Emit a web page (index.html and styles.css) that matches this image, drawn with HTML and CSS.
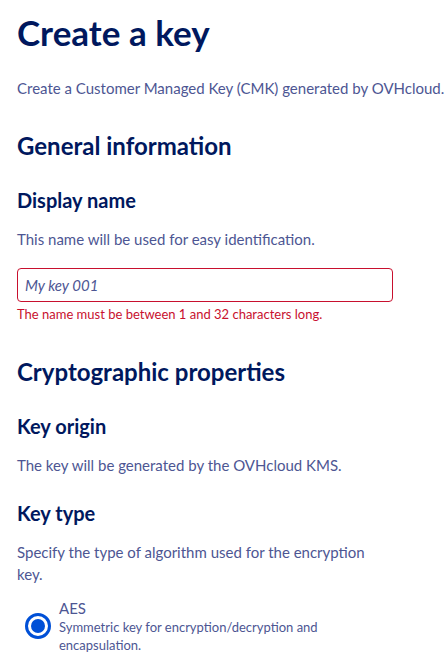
FILE: index.html
```html
<!DOCTYPE html>
<html lang="en">
<head>
<meta charset="utf-8">
<title>Create a key</title>
<link rel="stylesheet" href="styles.css">
</head>
<body>
<main class="page">
  <h1 class="title">Create a key</h1>
  <p class="lead">Create a Customer Managed Key (CMK) generated by OVHcloud.</p>

  <section class="section">
    <h2 class="section-title">General information</h2>
    <div class="field">
      <h3 class="field-title">Display name</h3>
      <p class="text">This name will be used for easy identification.</p>
      <input class="input input-error" type="text" placeholder="My key 001">
      <p class="error">The name must be between 1 and 32 characters long.</p>
    </div>
  </section>

  <section class="section">
    <h2 class="section-title">Cryptographic properties</h2>
    <div class="field">
      <h3 class="field-title">Key origin</h3>
      <p class="text">The key will be generated by the OVHcloud KMS.</p>
    </div>
    <div class="field">
      <h3 class="field-title">Key type</h3>
      <p class="text narrow">Specify the type of algorithm used for the encryption key.</p>
      <label class="radio-row">
        <span class="radio"><span class="radio-dot"></span></span>
        <span class="radio-text">
          <span class="radio-label">AES</span>
          <span class="radio-desc">Symmetric key for encryption/decryption and encapsulation.</span>
        </span>
      </label>
    </div>
  </section>
</main>
</body>
</html>
```
FILE: styles.css
```css
* { box-sizing: border-box; }
html, body { margin: 0; padding: 0; background: #fff; }
body {
  font-family: Lato, "Open Sans", sans-serif;
  color: #4d5693;
}
.page { padding: 8px 0 0 17px; }
.title {
  margin: 0;
  font-size: 35px;
  line-height: 48px;
  font-weight: 700;
  color: #00185e;
}
.lead {
  margin: 21px 0 0 0;
  font-size: 15px;
  line-height: 22px;
  white-space: nowrap;
}
.section-title {
  margin: 0;
  font-size: 24px;
  line-height: 30px;
  font-weight: 700;
  color: #00185e;
}
.section { margin-top: 32px; }
.section + .section { margin-top: 34px; }
.field { margin-top: 26px; }
.field + .field { margin-top: 24px; }
.field-title {
  margin: 0;
  font-size: 20px;
  line-height: 26px;
  font-weight: 700;
  color: #00185e;
}
.text {
  margin: 15px 0 0 0;
  font-size: 15px;
  line-height: 22px;
}
.narrow { max-width: 375px; }
.input {
  display: block;
  margin-top: 18px;
  width: 376px;
  height: 34px;
  border: 1px solid #c8102e;
  border-radius: 4px;
  padding: 0 7px;
  font-family: inherit;
  font-size: 15px;
  color: #00185e;
  background: #fff;
  outline: none;
}
.input::placeholder {
  font-style: italic;
  color: #4d5693;
  opacity: 1;
}
.error {
  margin: 3px 0 0 0;
  font-size: 13px;
  line-height: 18px;
  color: #c8102e;
}
.radio-row {
  display: flex;
  align-items: center;
  gap: 8px;
  margin-top: 13px;
  padding-left: 8px;
  max-width: 375px;
}
.radio {
  flex: none;
  width: 26px;
  height: 26px;
  border-radius: 50%;
  border: 3px solid #0050d7;
  display: flex;
  align-items: center;
  justify-content: center;
}
.radio-dot {
  width: 14px;
  height: 14px;
  border-radius: 50%;
  background: #0050d7;
}
.radio-text { display: flex; flex-direction: column; }
.radio-label { font-size: 15px; line-height: 20px; }
.radio-desc { font-size: 13px; line-height: 18px; max-width: 280px; }
```
